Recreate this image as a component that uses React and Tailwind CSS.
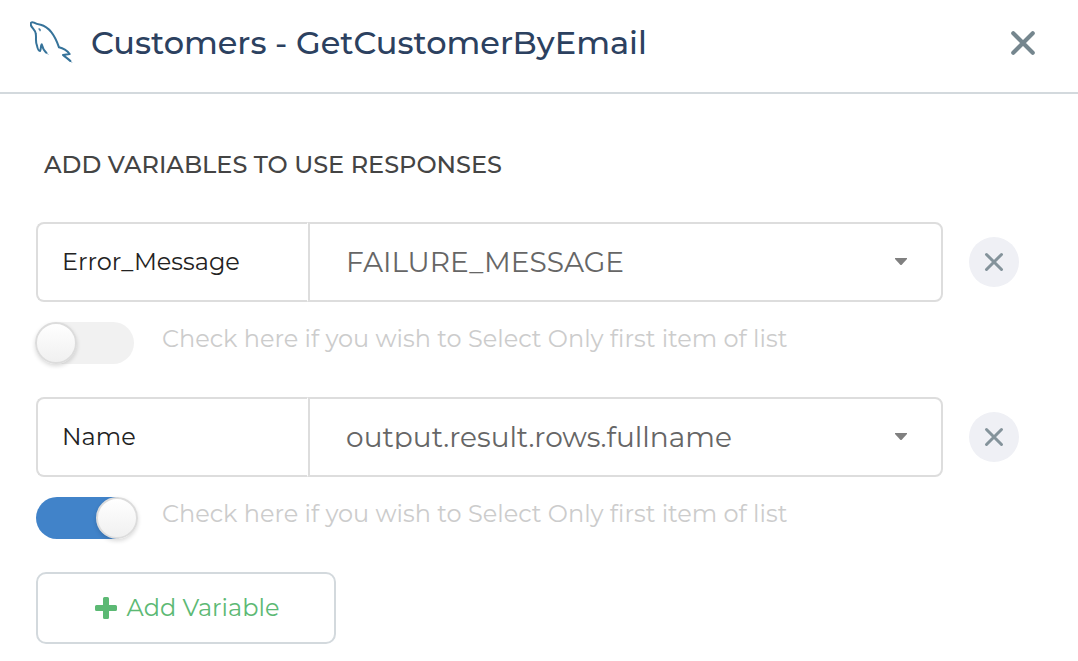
import { useState } from "react";

function DolphinIcon() {
  return (
    <svg viewBox="30 30 132 132" className="size-11 shrink-0" fill="none" stroke="#36739a" strokeWidth="6" strokeLinecap="round" strokeLinejoin="round" aria-hidden="true">
      <path d="M33 43C30 36 34 32 42 35C47 38 54 40 62 41C89 48 106 76 117 109C131 112 141 119 149 129L129 132C137 139 146 144 151 150" />
      <path d="M33 43C36 52 45 56 47 67C50 81 45 89 51 104C53 115 56 120 60 120C64 116 61 105 65 100C68 112 73 120 79 125" />
      <path d="M151 150L155 154M79 125L84 130" strokeWidth="2" />
      <path d="M57 54C60 54 61 56 60 59" strokeWidth="4" />
    </svg>
  );
}

function CrossIcon({ className, strokeWidth }) {
  return (
    <svg viewBox="0 0 24 24" className={className} fill="none" stroke="currentColor" strokeWidth={strokeWidth} strokeLinecap="round" aria-hidden="true">
      <path d="M3 3l18 18M21 3L3 21" />
    </svg>
  );
}

function VariableRow({ variable, onChange, onRemove }) {
  const { id, name, source, firstOnly } = variable;
  return (
    <li>
      <div className="flex items-center gap-[26px]">
        <div className="flex min-w-0 flex-1">
          <input
            type="text"
            aria-label="Variable name"
            value={name}
            onChange={(e) => onChange({ name: e.target.value })}
            className="h-20 w-[30%] rounded-l-lg border-2 border-r border-[#dddddd] border-r-white pb-0.5 pl-6 text-2xl text-[#222222] outline-none"
          />
          <div className="relative min-w-0 flex-1">
            <select
              aria-label="Response value"
              value={source}
              onChange={(e) => onChange({ source: e.target.value })}
              className="h-20 w-full appearance-none rounded-r-lg border-2 border-[#dddddd] bg-white pt-[17px] pr-16 pb-[26px] pl-9 text-[28px] text-[#666666] outline-none"
            >
              <option>FAILURE_MESSAGE</option>
              <option>output.result.rows.fullname</option>
            </select>
            <svg viewBox="0 0 12 7" className="pointer-events-none absolute top-9 right-9 h-[7px] w-3" fill="#808080" aria-hidden="true">
              <path d="M0 0h12v1L6.500 7h-1L0 1z" />
            </svg>
          </div>
        </div>
        <button type="button" aria-label="Remove variable" onClick={onRemove} className="flex size-[50px] shrink-0 items-center justify-center rounded-full bg-[#eff0f5] text-[#84939b]">
          <CrossIcon className="size-5" strokeWidth={3.6} />
        </button>
      </div>
      <div className="mt-5 flex items-start gap-7">
        <input
          id={`first-${id}`}
          type="checkbox"
          checked={firstOnly}
          onChange={(e) => onChange({ firstOnly: e.target.checked })}
          className="h-[42px] w-[98px] shrink-0 appearance-none rounded-full bg-[#f1f1f1] before:-ml-px before:block before:size-[42px] before:rounded-full before:border-2 before:border-[#dcdcdc] before:bg-linear-to-b before:from-white before:to-[#f0f0f0] before:shadow-[0_2px_4px_rgba(0,0,0,0.15)] checked:bg-[#4183c9] checked:before:ml-[60px]"
        />
        <label htmlFor={`first-${id}`} className="text-2xl leading-[34px] text-[#cccccc]">
          Check here if you wish to Select Only first item of list
        </label>
      </div>
    </li>
  );
}

export default function App() {
  const [variables, setVariables] = useState([
    { id: 1, name: "Error_Message", source: "FAILURE_MESSAGE", firstOnly: false },
    { id: 2, name: "Name", source: "output.result.rows.fullname", firstOnly: true },
  ]);
  const update = (id, patch) => setVariables((all) => all.map((v) => (v.id === id ? { ...v, ...patch } : v)));
  const remove = (id) => setVariables((all) => all.filter((v) => v.id !== id));
  const add = () => setVariables((all) => [...all, { id: Date.now(), name: "", source: "FAILURE_MESSAGE", firstOnly: false }]);

  return (
    <div className="bg-white font-['Montserrat','Inter',sans-serif]">
      <header className="flex items-center gap-[17px] border-b-2 border-[#d3d9dd] pt-[21px] pr-[42px] pb-[27px] pl-[30px]">
        <DolphinIcon />
        <h1 className="flex-1 text-[32px] leading-[44px] font-medium text-[#2c4160]">Customers - GetCustomerByEmail</h1>
        <button type="button" aria-label="Close" className="text-[#75868e]">
          <CrossIcon className="size-[26px]" strokeWidth={3.8} />
        </button>
      </header>
      <main className="pt-[55px] pr-[59px] pb-4 pl-9">
        <h2 className="pl-2 text-2xl leading-8 font-medium text-[#444444]">ADD VARIABLES TO USE RESPONSES</h2>
        <ul className="mt-[41px] flex flex-col gap-[33px]">
          {variables.map((v) => (
            <VariableRow key={v.id} variable={v} onChange={(patch) => update(v.id, patch)} onRemove={() => remove(v.id)} />
          ))}
        </ul>
        <button type="button" onClick={add} className="mt-[33px] flex h-[72px] w-[300px] items-center justify-center gap-2.5 rounded-[10px] border-2 border-[#d3d9dd] pl-0.5 text-2xl text-[#5cb974]">
          <svg viewBox="0 0 22 22" className="size-[22px]" fill="currentColor" aria-hidden="true">
            <path d="M9.500 0h3q1.500 0 1.500 1.500V8h6.500q1.500 0 1.500 1.500v3q0 1.500-1.500 1.500H14v6.500q0 1.500-1.500 1.500h-3Q8 22 8 20.500V14H1.500Q0 14 0 12.500v-3Q0 8 1.500 8H8V1.500Q8 0 9.500 0z" />
          </svg>
          Add Variable
        </button>
      </main>
    </div>
  );
}
